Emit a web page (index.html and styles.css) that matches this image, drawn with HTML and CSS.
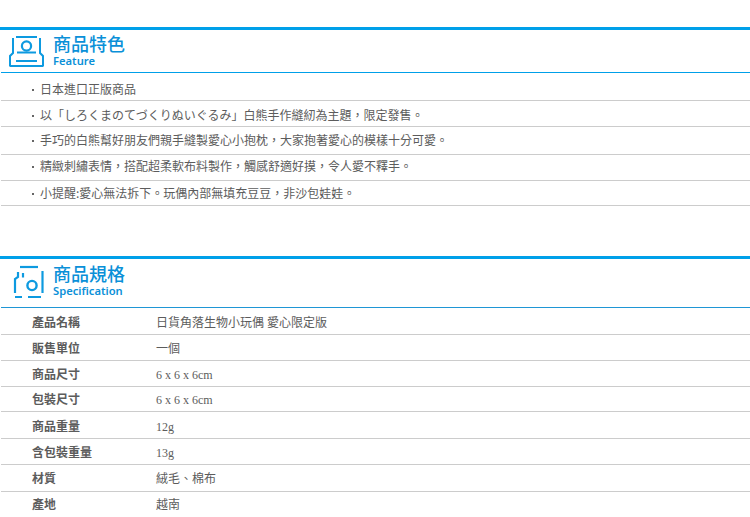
FILE: index.html
```html
<!DOCTYPE html>
<html lang="zh-Hant">
<head>
<meta charset="utf-8">
<title>商品</title>
<link rel="stylesheet" href="styles.css">
</head>
<body>
<section class="section feature">
  <header class="head">
    <svg class="icon" width="50" height="42" viewBox="0 0 50 42" fill="none" stroke="#0d9ae0" stroke-width="2">
      <path d="M16 7H37"/>
      <path d="M13 8V23L10 26V36.5M40 8V23L43 26V36.5"/>
      <circle cx="26.5" cy="16" r="4.6" stroke-width="2.2"/>
      <path d="M17 22.5H36"/>
      <path d="M16 31H37"/>
      <path d="M10 36H43"/>
    </svg>
    <div class="titles">
      <h2>商品特色</h2>
      <p>Feature</p>
    </div>
  </header>
  <ul class="points">
    <li>日本進口正版商品</li>
    <li>以「しろくまのてづくりぬいぐるみ」白熊手作縫紉為主題，限定發售。</li>
    <li>手巧的白熊幫好朋友們親手縫製愛心小抱枕，大家抱著愛心的模樣十分可愛。</li>
    <li>精緻刺繡表情，搭配超柔軟布料製作，觸感舒適好摸，令人愛不釋手。</li>
    <li>小提醒:愛心無法拆下。玩偶內部無填充豆豆，非沙包娃娃。</li>
  </ul>
</section>
<section class="section spec">
  <header class="head">
    <svg class="icon" width="50" height="48" viewBox="0 0 50 48" fill="none" stroke="#0d9ae0" stroke-width="2.2">
      <path d="M20 8H38"/>
      <path d="M42.5 12V34"/>
      <path d="M18 13V18L15 20V34"/>
      <path d="M23 14V18.5"/>
      <circle cx="32" cy="26.5" r="4.6" stroke-width="2.4"/>
      <path d="M15 38H22M28 38H41"/>
    </svg>
    <div class="titles">
      <h2>商品規格</h2>
      <p>Specification</p>
    </div>
  </header>
  <dl class="specs">
    <div class="row"><dt>產品名稱</dt><dd>日貨角落生物小玩偶 愛心限定版</dd></div>
    <div class="row"><dt>販售單位</dt><dd>一個</dd></div>
    <div class="row"><dt>商品尺寸</dt><dd>6 x 6 x 6cm</dd></div>
    <div class="row"><dt>包裝尺寸</dt><dd>6 x 6 x 6cm</dd></div>
    <div class="row"><dt>商品重量</dt><dd>12g</dd></div>
    <div class="row"><dt>含包裝重量</dt><dd>13g</dd></div>
    <div class="row"><dt>材質</dt><dd>絨毛、棉布</dd></div>
    <div class="row"><dt>產地</dt><dd>越南</dd></div>
  </dl>
</section>
</body>
</html>
```
FILE: styles.css
```css
html, body {
  margin: 0;
  padding: 0;
  background: #fff;
  overflow: hidden;
}
body {
  height: 517px;
  padding-top: 27px;
  box-sizing: border-box;
  font-family: "Liberation Serif", "Noto Sans CJK TC", serif;
  font-size: 12px;
  color: #5c5c5c;
}
.section {
  border-top: 3px solid #00a0e9;
}
.spec {
  margin-top: 50px;
}
.head {
  display: flex;
  height: 42px;
  margin-left: 1px;
  border-bottom: 1px solid #00a0e9;
}
.spec .head {
  height: 47px;
  height: 48px;
  border-bottom-color: #1f96d5;
}
.icon {
  flex: none;
  margin-left: -1px;
}
.titles {
  margin-left: 3px;
  padding-top: 4px;
}
.spec .titles {
  padding-top: 5px;
}
.titles h2 {
  margin: 0;
  font: 500 18px/22px "Liberation Sans", "Noto Sans CJK TC", sans-serif;
  color: #0a90d8;
}
.titles p {
  margin: 0;
  font: 600 11.2px/10px "Noto Sans", sans-serif;
  color: #0a90d8;
}
.points {
  list-style: none;
  margin: 0 0 0 1px;
  padding: 0;
}
.points li {
  height: 25px;
  padding-left: 31px;
  border-bottom: 1px solid #ccc;
  font-family: "Noto Sans CJK TC", sans-serif;
  white-space: nowrap;
}
.points li::before {
  content: "";
  display: inline-block;
  width: 2px;
  height: 2px;
  margin-right: 6px;
  vertical-align: 3px;
  background: #666;
}
.points li:nth-child(1) { height: 27px; line-height: 32px; }
.points li:nth-child(2) { height: 25px; line-height: 28px; }
.points li:nth-child(3) { height: 27px; line-height: 26px; }
.points li:nth-child(4) { height: 25px; line-height: 22px; }
.points li:nth-child(5) { height: 24px; line-height: 24px; }
.specs {
  margin: 0 0 0 1px;
}
.row {
  display: flex;
  align-items: baseline;
  border-bottom: 1px solid #ccc;
}
.row:nth-child(1) { height: 26px; line-height: 28px; }
.row:nth-child(2) { height: 25px; line-height: 26px; }
.row:nth-child(3) { height: 25px; line-height: 26px; }
.row:nth-child(4) { height: 24px; line-height: 24px; }
.row:nth-child(5) { height: 26px; line-height: 28px; }
.row:nth-child(6) { height: 25px; line-height: 26px; }
.row:nth-child(7) { height: 26px; line-height: 26px; }
.row:nth-child(8) { height: 25px; line-height: 24px; }
.row dt {
  width: 124px;
  padding-left: 31px;
  font-family: "Noto Sans CJK TC", sans-serif;
  font-weight: 700;
}
.row dd {
  margin: 0;
}
```
